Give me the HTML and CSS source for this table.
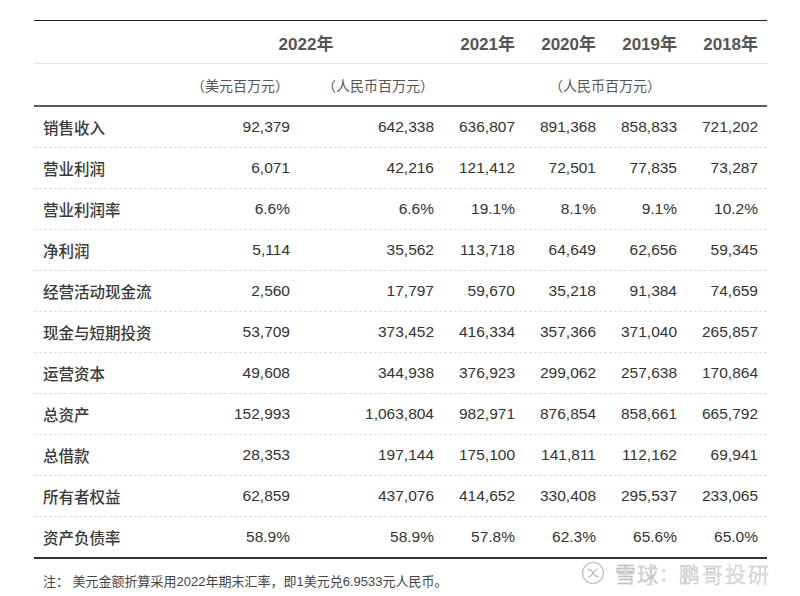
FILE: index.html
```html
<!DOCTYPE html>
<html lang="zh-CN">
<head>
<meta charset="utf-8">
<link rel="stylesheet" href="styles.css">
</head>
<body>
<div class="page">
  <div class="table">
    <div class="row head">
      <div class="cell"></div>
      <div class="cell span2 year22">2022年</div>
      <div class="cell num">2021年</div>
      <div class="cell num">2020年</div>
      <div class="cell num">2019年</div>
      <div class="cell num">2018年</div>
    </div>
    <div class="row units">
      <div class="cell"></div>
      <div class="cell center">（美元百万元）</div>
      <div class="cell center rmb">（人民币百万元）</div>
      <div class="cell span4 center">（人民币百万元）</div>
    </div>
    <div class="row data"><div class="cell label">销售收入</div><div class="cell num">92,379</div><div class="cell num">642,338</div><div class="cell num">636,807</div><div class="cell num">891,368</div><div class="cell num">858,833</div><div class="cell num">721,202</div></div>
    <div class="row data"><div class="cell label">营业利润</div><div class="cell num">6,071</div><div class="cell num">42,216</div><div class="cell num">121,412</div><div class="cell num">72,501</div><div class="cell num">77,835</div><div class="cell num">73,287</div></div>
    <div class="row data"><div class="cell label">营业利润率</div><div class="cell num">6.6%</div><div class="cell num">6.6%</div><div class="cell num">19.1%</div><div class="cell num">8.1%</div><div class="cell num">9.1%</div><div class="cell num">10.2%</div></div>
    <div class="row data"><div class="cell label">净利润</div><div class="cell num">5,114</div><div class="cell num">35,562</div><div class="cell num">113,718</div><div class="cell num">64,649</div><div class="cell num">62,656</div><div class="cell num">59,345</div></div>
    <div class="row data"><div class="cell label">经营活动现金流</div><div class="cell num">2,560</div><div class="cell num">17,797</div><div class="cell num">59,670</div><div class="cell num">35,218</div><div class="cell num">91,384</div><div class="cell num">74,659</div></div>
    <div class="row data"><div class="cell label">现金与短期投资</div><div class="cell num">53,709</div><div class="cell num">373,452</div><div class="cell num">416,334</div><div class="cell num">357,366</div><div class="cell num">371,040</div><div class="cell num">265,857</div></div>
    <div class="row data"><div class="cell label">运营资本</div><div class="cell num">49,608</div><div class="cell num">344,938</div><div class="cell num">376,923</div><div class="cell num">299,062</div><div class="cell num">257,638</div><div class="cell num">170,864</div></div>
    <div class="row data"><div class="cell label">总资产</div><div class="cell num">152,993</div><div class="cell num">1,063,804</div><div class="cell num">982,971</div><div class="cell num">876,854</div><div class="cell num">858,661</div><div class="cell num">665,792</div></div>
    <div class="row data"><div class="cell label">总借款</div><div class="cell num">28,353</div><div class="cell num">197,144</div><div class="cell num">175,100</div><div class="cell num">141,811</div><div class="cell num">112,162</div><div class="cell num">69,941</div></div>
    <div class="row data"><div class="cell label">所有者权益</div><div class="cell num">62,859</div><div class="cell num">437,076</div><div class="cell num">414,652</div><div class="cell num">330,408</div><div class="cell num">295,537</div><div class="cell num">233,065</div></div>
    <div class="row data last"><div class="cell label">资产负债率</div><div class="cell num">58.9%</div><div class="cell num">58.9%</div><div class="cell num">57.8%</div><div class="cell num">62.3%</div><div class="cell num">65.6%</div><div class="cell num">65.0%</div></div>
  </div>
  <div class="note">注： 美元金额折算采用2022年期末汇率，即1美元兑6.9533元人民币。</div>
  <div class="watermark">
    <svg class="wm-logo" width="24" height="24" viewBox="0 0 24 24">
      <circle cx="12" cy="12" r="10.5" fill="#fff" stroke="#bdbdbd" stroke-width="1.2"/>
      <path d="M6.5 8.5 C9 8 11 10 12 12 C13 14 15 16 17.5 15.5" fill="none" stroke="#bdbdbd" stroke-width="1.2"/>
      <path d="M7 16 C9 16 10.5 14.5 12 12 C13.5 9.5 15 8 17 8" fill="none" stroke="#bdbdbd" stroke-width="1.2"/>
    </svg>
    <span class="wm-text">雪球</span><span class="wm-colon">：</span><span class="wm-text small">鹏哥投研</span>
  </div>
</div>
</body>
</html>
```

FILE: styles.css
```css
* { box-sizing: border-box; }
html, body {
  margin: 0;
  padding: 0;
  background: #fff;
}
body {
  width: 800px;
  height: 596px;
  overflow: hidden;
  font-family: "Liberation Sans", "Noto Sans CJK SC", sans-serif;
  color: #333;
}
.page {
  position: relative;
  width: 800px;
  height: 596px;
  padding-top: 20px;
}
.table {
  margin-left: 34px;
  width: 733px;
  border-top: 1px solid #222;
}
.row {
  display: grid;
  grid-template-columns: 147px 118px 144px 81px 81px 81px 81px;
  align-items: center;
}
.cell {
  padding: 0 9px;
  white-space: nowrap;
}
.head {
  height: 43px;
  border-bottom: 1px solid #e2e2e2;
  font-weight: bold;
  font-size: 17px;
  color: #555;
}
.span2 { grid-column: span 2; }
.span4 { grid-column: span 4; }
.year22 {
  text-align: center;
  padding: 0 12px 0 0;
}
.units {
  height: 43px;
  border-bottom: 2px solid #5a5a5a;
  font-size: 14px;
  color: #555;
}
.center { text-align: center; }
.rmb { padding-left: 20px; padding-right: 6px; }
.data {
  height: 41px;
  border-bottom: 1px dashed #dcdcdc;
  font-size: 15.5px;
}
.data.last {
  border-bottom: 2px solid #333;
  height: 42px;
}
.num { text-align: right; }
.label {
  color: #3a3a3a;
  font-weight: 500;
}
.note {
  margin: 12px 0 0 43px;
  font-size: 13px;
  color: #444;
}
.watermark {
  position: absolute;
  left: 581px;
  top: 558px;
  display: flex;
  align-items: center;
}
.wm-logo { margin-right: 10px; }
.wm-text {
  font-family: "Noto Sans CJK SC", sans-serif;
  font-size: 21px;
  font-weight: 300;
  color: #fff;
  -webkit-text-stroke: 0.6px #b5b5b5;
  letter-spacing: 1px;
}
.wm-text.small { letter-spacing: 2px; -webkit-text-stroke: 0.5px #bbbbbb; }
.wm-colon {
  font-family: "Noto Sans CJK SC", sans-serif;
  font-size: 18px;
  font-weight: 300;
  color: #fff;
  -webkit-text-stroke: 0.6px #b5b5b5;
  margin-right: 2px;
}
```
